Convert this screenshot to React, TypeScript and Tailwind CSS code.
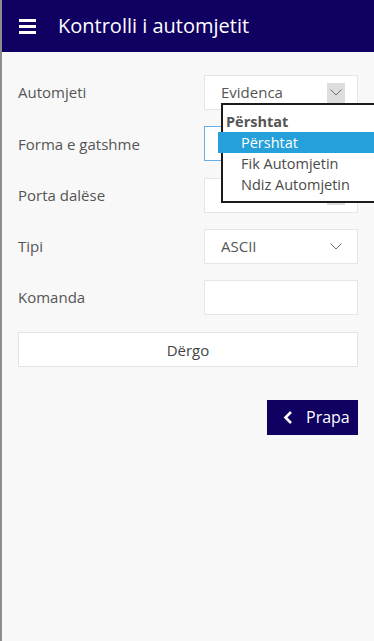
import React from "react";

const rows = [
  { label: "Automjeti", kind: "select", value: "Evidenca", hover: true },
  { label: "Forma e gatshme", kind: "focus", value: "" },
  { label: "Porta dalëse", kind: "select", value: "", hover: true },
  { label: "Tipi", kind: "select", value: "ASCII" },
  { label: "Komanda", kind: "input", value: "" },
];

function Chevron({ boxed }: { boxed?: boolean }) {
  return (
    <span
      className={`flex items-center justify-center w-[18px] h-[20px] ${boxed ? "bg-[#dddddd]" : ""}`}
    >
      <svg width="12" height="7" viewBox="0 0 12 7" fill="none">
        <path d="M0.5 0.5 L6 6 L11.5 0.5" stroke="#707070" strokeWidth="1" />
      </svg>
    </span>
  );
}

export default function App() {
  return (
    <div className="relative w-[374px] h-[641px] overflow-hidden bg-[#f8f8f8] border-l-2 border-[#8d8d8d] font-['Open_Sans',sans-serif]">
      {/* Header */}
      <div className="h-[52px] bg-[#100062] flex items-center pl-[17px]">
        <span className="flex flex-col gap-[3px] w-[17px]">
          <span className="h-[3px] bg-white" />
          <span className="h-[3px] bg-white" />
          <span className="h-[3px] bg-white" />
        </span>
        <span className="ml-[22px] text-white text-[20px] leading-none">Kontrolli i automjetit</span>
      </div>

      <div className="px-4 pt-[23px] flex flex-col gap-[16.25px]">
        {rows.map((r) => (
          <div key={r.label} className="flex items-center justify-between h-[35px]">
            <span className="text-[15px] text-[#555555]">{r.label}</span>
            <div
              className={`w-[154px] h-[35px] bg-white flex items-center justify-between pl-4 pr-[12px] border ${
                r.kind === "focus" ? "border-[#66afe9]" : "border-[#e6e6e6]"
              }`}
            >
              <span className="text-[15px] text-[#555555]">{r.value}</span>
              {r.kind === "select" && <Chevron boxed={r.hover} />}
            </div>
          </div>
        ))}

        <button className="mt-[1px] h-[35px] w-full bg-white border border-[#e3e3e3] text-[15px] text-[#444444]">
          Dërgo
        </button>

        <div className="flex justify-end mt-[16px]">
          <button className="w-[91px] h-[35px] bg-[#100062] text-white text-[16px] flex items-center pl-4 gap-[13px]">
            <svg width="10" height="13" viewBox="0 0 10 13" fill="none">
              <path d="M8 1 L2.5 6.5 L8 12" stroke="white" strokeWidth="2.6" />
            </svg>
            Prapa
          </button>
        </div>
      </div>

      {/* Open select list */}
      <div className="absolute left-[219px] top-[103px] w-[170px] h-[100px] bg-white border-2 border-[#1b1b1b] pt-[7px] text-[14.5px] leading-[20px]">
        <div className="pl-[3px] font-bold text-[#555555]">Përshtat</div>
        <div className="relative -ml-[5px] h-[21px] bg-[#26a0da] text-white pl-[23px] flex items-center">
          Përshtat
        </div>
        <div className="h-[21px] pl-[18px] text-[#4a4a4a] flex items-center">Fik Automjetin</div>
        <div className="h-[21px] pl-[18px] text-[#4a4a4a] flex items-center">Ndiz Automjetin</div>
      </div>
    </div>
  );
}
